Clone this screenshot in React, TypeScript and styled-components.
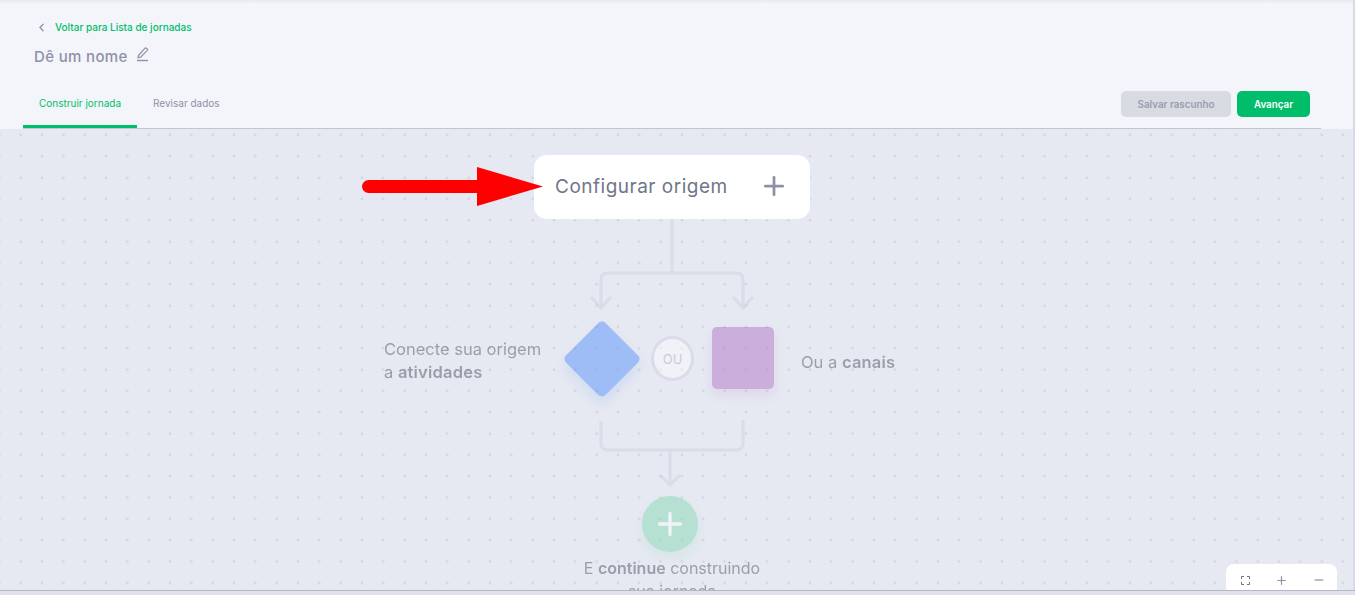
import React from 'react';
import styled, { createGlobalStyle } from 'styled-components';
import { ChevronLeft, Plus, Minus } from 'lucide-react';

const GlobalStyle = createGlobalStyle`
  html, body {
    margin: 0;
    height: 100%;
    overflow: hidden;
    background: #f3f5fa;
    font-family: 'Inter', 'Liberation Sans', sans-serif;
  }
  * { box-sizing: border-box; }
`;

const App = () => {
  return (
    <Page>
      <GlobalStyle />
      <Header>
        <BackLink>
          <ChevronLeft size={13} color="#8a8fa3" strokeWidth={2.2} />
          <span>Voltar para Lista de jornadas</span>
        </BackLink>
        <TitleRow>
          <Title>Dê um nome</Title>
          <svg width="13" height="16" viewBox="0 0 13 16" fill="none" stroke="#8d91a5" strokeWidth="1.2">
            <path d="M2.500 9.500 9 2.200a1 1 0 0 1 1.400 0l.9.8a1 1 0 0 1 0 1.400L4.600 11.200l-2.600.6z" />
            <path d="M1 14.500h11" strokeWidth="1.400" />
          </svg>
        </TitleRow>
        <TabBar>
          <Tabs>
            <Tab $active>Construir jornada</Tab>
            <Tab>Revisar dados</Tab>
          </Tabs>
          <Actions>
            <DraftButton>Salvar rascunho</DraftButton>
            <NextButton>Avançar</NextButton>
          </Actions>
        </TabBar>
      </Header>

      <Canvas>
        <OriginCard>
          <span>Configurar origem</span>
          <Plus size={30} color="#8d91a5" strokeWidth={2.2} />
        </OriginCard>

        <RedArrow width="181" height="39" viewBox="0 0 181 39">
          <path d="M6.500 13H115V0l66 19.500L115 39V26H6.500a6.500 6.500 0 0 1 0-13z" fill="#ff0000" />
        </RedArrow>

        <Faded>
          <Wires width="170" height="332" viewBox="0 0 170 332" fill="none" stroke="#c5c8de" strokeWidth="3">
            <path d="M86 0v54M86 54H21a6 6 0 0 0-6 6v28M86 54h65a6 6 0 0 1 6 6v28" />
            <path d="M5 78l10 11 10-11M147 78l10 11 10-11" />
            <path d="M15 202v23a6 6 0 0 0 6 6h130a6 6 0 0 0 6-6v-24M84 231v35M74 256l10 10 10-10" />
          </Wires>
          <SideTextLeft>
            Conecte sua origem
            <br />a <b>atividades</b>
          </SideTextLeft>
          <Diamond />
          <OrBadge>OU</OrBadge>
          <Square />
          <SideTextRight>
            Ou a <b>canais</b>
          </SideTextRight>
          <AddCircle>
            <Plus size={36} color="#fff" strokeWidth={2.2} />
          </AddCircle>
          <ContinueText>
            E <b>continue</b> construindo
            <br />
            sua jornada
          </ContinueText>
        </Faded>

        <ZoomBar>
          <svg width="9" height="9" viewBox="0 0 9 9" fill="none" stroke="#6f7386" strokeWidth="1">
            <path d="M.5 3V.5H3M6 .5h2.500V3M8.500 6v2.500H6M3 8.500H.5V6" />
          </svg>
          <Plus size={13} color="#8d91a5" strokeWidth={2.2} />
          <Minus size={14} color="#6f7386" strokeWidth={1.6} />
        </ZoomBar>
      </Canvas>
      <BottomStrip />
      <ScrollEdge />
    </Page>
  );
};

const Page = styled.div`
  position: relative;
  display: flex;
  flex-direction: column;
  width: 1355px;
  height: 595px;
  overflow: hidden;
`;

const ScrollEdge = styled.div`
  position: absolute;
  top: 0;
  right: 0;
  bottom: 5px;
  width: 2px;
  background: #d9dbe4;
`;

const Header = styled.header`
  display: flex;
  flex-direction: column;
  flex: 0 0 129px;
  padding: 20px 34px 0 23px;
  background: linear-gradient(#e9eaee 0, #f3f5fa 4px);
`;

const BackLink = styled.div`
  display: flex;
  align-items: center;
  gap: 6px;
  height: 14px;
  padding-left: 12px;
  font-size: 10px;
  font-weight: 500;
  color: #00bf6b;

  span {
    margin-left: 1px;
  }
`;

const TitleRow = styled.div`
  display: flex;
  align-items: flex-start;
  gap: 8px;
  margin-top: 12px;
  padding-left: 11px;
  height: 22px;
`;

const Title = styled.h1`
  margin: 0;
  font-size: 15px;
  letter-spacing: 0.35px;
  line-height: 22px;
  font-weight: 500;
  color: #8d91a5;
`;

const TabBar = styled.div`
  display: flex;
  justify-content: space-between;
  flex: 1;
  margin-top: 13px;
  border-bottom: 1px solid #c2c5d2;
`;

const Tabs = styled.nav`
  display: flex;
  align-items: stretch;
`;

const Tab = styled.div<{ $active?: boolean }>`
  display: flex;
  align-items: flex-start;
  padding: 16px 16px 0;
  font-size: 10px;
  font-weight: 400;
  color: ${p => (p.$active ? '#00bf6b' : '#8d91a5')};
  border-bottom: 3px solid ${p => (p.$active ? '#00bf6b' : 'transparent')};
`;

const Actions = styled.div`
  display: flex;
  align-items: flex-start;
  gap: 6px;
  padding: 10px 11px 0 0;
`;

const DraftButton = styled.button`
  width: 110px;
  height: 26px;
  border: none;
  border-radius: 5px;
  background: #d9dbe3;
  color: #9a9dae;
  font: 600 9.800px 'Inter', sans-serif;
`;

const NextButton = styled(DraftButton)`
  width: 73px;
  background: #00bd6a;
  color: #fff;
`;

const Canvas = styled.main`
  position: relative;
  flex: 1;
  overflow: hidden;
  background-color: #e6e9f2;
  background-image: radial-gradient(circle, #d2d5e0 1px, transparent 1.7px);
  background-size: 21.33px 21.33px;
  background-position: 10px -4.670px;
`;

const BottomStrip = styled.div`
  flex: 0 0 5px;
  background: #dfe2ee;
  border-top: 1px solid #b4b7c4;
`;

const OriginCard = styled.div`
  position: absolute;
  left: 534px;
  top: 26px;
  width: 276px;
  height: 64px;
  display: flex;
  align-items: center;
  justify-content: space-between;
  padding: 0 21px 2px 21px;
  background: #fff;
  border-radius: 13px;
  font-size: 19px;
  letter-spacing: 0.5px;
  color: #6f7689;
`;

const RedArrow = styled.svg`
  position: absolute;
  left: 362px;
  top: 38px;
`;

const Faded = styled.div`
  position: absolute;
  inset: 0;
  opacity: 0.4;
`;

const Wires = styled.svg`
  position: absolute;
  left: 586px;
  top: 90px;
`;

const SideText = styled.div`
  position: absolute;
  font-size: 16px;
  line-height: 23px;
  color: #282d41;
  b { font-weight: 600; }
`;

const SideTextLeft = styled(SideText)`
  left: 384px;
  top: 209px;
  font-size: 16.500px;
  b { letter-spacing: 0.2px; }
`;

const SideTextRight = styled(SideText)`
  left: 801px;
  top: 222px;
  font-size: 16.500px;
  b { letter-spacing: 0.2px; }
`;

const Diamond = styled.div`
  position: absolute;
  left: 574px;
  top: 202px;
  width: 56px;
  height: 56px;
  border-radius: 5px;
  background: #347afc;
  transform: rotate(45deg);
  box-shadow: 5px 5px 12px rgba(52, 122, 252, 0.3);
`;

const OrBadge = styled.div`
  position: absolute;
  left: 651px;
  top: 207px;
  width: 43px;
  height: 45px;
  display: flex;
  align-items: center;
  justify-content: center;
  border: 3px solid #c5c8de;
  border-radius: 50%;
  background: #ffffff;
  color: #9a9dae;
  font-size: 13px;
  font-weight: 400;
`;

const Square = styled.div`
  position: absolute;
  left: 712px;
  top: 198px;
  width: 62px;
  height: 62px;
  border-radius: 5px;
  background: #a255b9;
  box-shadow: 0 6px 12px rgba(162, 85, 185, 0.3);
`;

const AddCircle = styled.div`
  position: absolute;
  left: 642px;
  top: 367px;
  width: 56px;
  height: 56px;
  display: flex;
  align-items: center;
  justify-content: center;
  border-radius: 50%;
  background: #6bd2a3;
  box-shadow: 0 6px 12px rgba(107, 210, 163, 0.35);
`;

const ContinueText = styled(SideText)`
  left: 572px;
  top: 428px;
  width: 200px;
  text-align: center;
`;

const ZoomBar = styled.div`
  position: absolute;
  left: 1226px;
  top: 435px;
  width: 111px;
  height: 30px;
  display: flex;
  align-items: center;
  justify-content: space-between;
  padding: 2px 11px 0 15px;
  background: #fff;
  border-radius: 8px 8px 0 0;
`;

export default App;
